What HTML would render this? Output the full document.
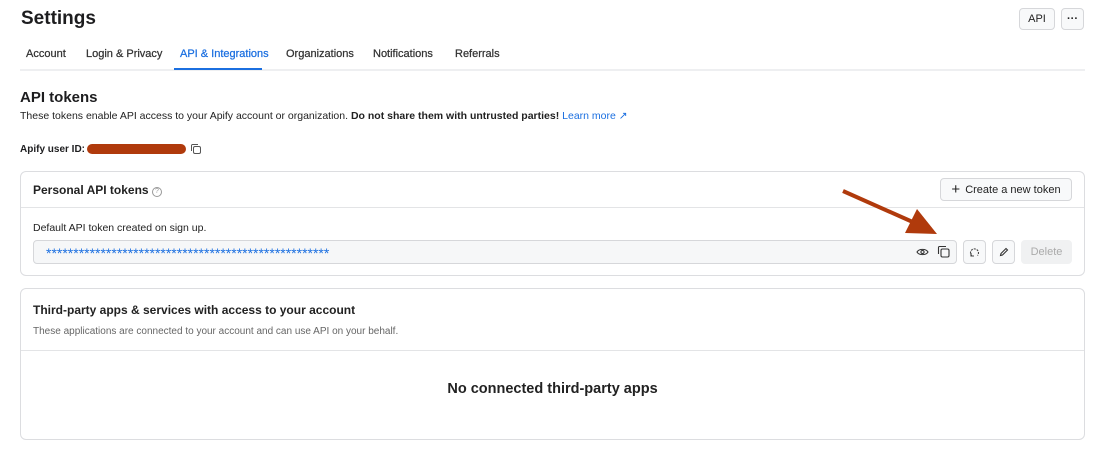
<!DOCTYPE html>
<html><head><style>
*{box-sizing:border-box;margin:0;padding:0}
body{width:1100px;height:457px;background:#fff;font-family:"Liberation Sans",Arial,sans-serif;color:#1d1d1f;position:relative;overflow:hidden}
.a{position:absolute}
.btn{position:absolute;border:1px solid #d6d7da;border-radius:4px;background:#f8f9fa;display:flex;align-items:center;justify-content:center;font-size:11px;color:#222}
.card{position:absolute;left:20px;width:1065px;border:1px solid #dcdde0;border-radius:6px}
.tab{position:absolute;top:48px;font-size:11px;color:#333;-webkit-text-stroke:0.25px #333}
</style></head><body>
<div class="a" style="left:21px;top:8px;font-size:19px;font-weight:bold">Settings</div>
<div class="btn" style="left:1019px;top:8px;width:36px;height:22px;font-size:11px">API</div>
<div class="btn" style="left:1061px;top:8px;width:23px;height:22px;font-weight:bold">···</div>
<div class="tab" style="left:26px">Account</div>
<div class="tab" style="left:86px">Login &amp; Privacy</div>
<div class="tab" style="left:180px;color:#1b6fe0;-webkit-text-stroke:0.25px #1b6fe0">API &amp; Integrations</div>
<div class="tab" style="left:286px">Organizations</div>
<div class="tab" style="left:373px">Notifications</div>
<div class="tab" style="left:455px">Referrals</div>
<div class="a" style="left:20px;top:69px;width:1065px;height:2px;background:#eeeff1"></div>
<div class="a" style="left:174px;top:68px;width:88px;height:2px;background:#1b6fe0"></div>
<div class="a" style="left:20px;top:89px;font-size:15px;font-weight:bold">API tokens</div>
<div class="a" style="left:20px;top:110px;font-size:10.5px;color:#222">These tokens enable API access to your Apify account or organization. <b>Do not share them with untrusted parties!</b> <span style="color:#1b6fe0">Learn more ↗</span></div>
<div class="a" style="left:20px;top:144px;font-size:10px;line-height:12px;font-weight:bold">Apify user ID:</div>
<div class="a" style="left:87px;top:144px;width:99px;height:10px;border-radius:5px;background:#b03a0c"></div>
<svg class="a" style="left:190px;top:143px" width="12" height="12" viewBox="0 0 12 12" fill="none" stroke="#555" stroke-width="1"><rect x="3.5" y="3.5" width="7" height="7" rx="1.5"/><path d="M1.5 8V2.5a1 1 0 0 1 1-1H8"/></svg>

<div class="card" style="top:171px;height:105px">
 <div class="a" style="left:12px;top:11px;font-size:12px;font-weight:bold;color:#222">Personal API tokens <span style="display:inline-block;width:10px;height:10px;border:1px solid #999;border-radius:50%;font-size:7px;color:#999;text-align:center;line-height:8px;vertical-align:1px;font-weight:normal">?</span></div>
 <div class="btn" style="left:919px;top:6px;width:132px;height:23px;font-size:11px"><span style="font-size:15px;margin-right:5px;font-weight:normal">+</span>Create a new token</div>
 <div class="a" style="left:0;top:35px;width:1063px;height:1px;background:#e3e4e6"></div>
 <div class="a" style="left:12px;top:50px;font-size:10.5px;color:#222">Default API token created on sign up.</div>
 <div class="a" style="left:12px;top:68px;width:924px;height:24px;border:1px solid #d6d7da;border-radius:4px;background:#f6f7f8"></div>
 <div class="a" style="left:25px;top:74px;font-size:14px;line-height:14px;color:#1b6fe0">****************************************************</div>
 <svg class="a" style="left:895px;top:75px" width="13" height="10" viewBox="0 0 13 10" fill="none" stroke="#333" stroke-width="1.1"><path d="M1 5C3 1.5 10 1.5 12 5C10 8.5 3 8.5 1 5Z"/><circle cx="6.5" cy="5" r="1.6"/></svg>
 <svg class="a" style="left:916px;top:73px" width="13" height="13" viewBox="0 0 13 13" fill="none" stroke="#333" stroke-width="1.1"><rect x="4" y="4" width="8" height="8" rx="1.5"/><path d="M1.5 9V2.5a1 1 0 0 1 1-1H9"/></svg>
 <div class="btn" style="left:942px;top:68px;width:23px;height:24px"><svg width="11" height="11" viewBox="0 0 11 11" fill="none" stroke="#444" stroke-width="1.1"><path d="M3 9A4 4 0 1 1 8.5 8.5" stroke-dasharray="2 1"/><path d="M2 6v3h3"/></svg></div>
 <div class="btn" style="left:971px;top:68px;width:23px;height:24px"><svg width="10" height="10" viewBox="0 0 10 10" fill="none" stroke="#333" stroke-width="1.1"><path d="M1.5 8.5l.5-2 5-5 1.5 1.5-5 5z"/></svg></div>
 <div class="btn" style="left:1000px;top:68px;width:51px;height:24px;background:#f0f1f2;border-color:#f0f1f2;color:#aaa">Delete</div>
</div>

<div class="card" style="top:288px;height:152px">
 <div class="a" style="left:12px;top:14px;font-size:12px;font-weight:bold;color:#222">Third-party apps &amp; services with access to your account</div>
 <div class="a" style="left:12px;top:37px;font-size:10px;color:#666">These applications are connected to your account and can use API on your behalf.</div>
 <div class="a" style="left:0;top:61px;width:1063px;height:1px;background:#e3e4e6"></div>
 <div class="a" style="left:0;top:92px;width:1063px;text-align:center;font-size:14.5px;font-weight:bold;color:#222">No connected third-party apps</div>
</div>

<svg class="a" style="left:0;top:0" width="1100" height="457"><line x1="843" y1="191" x2="915" y2="223" stroke="#b03a0c" stroke-width="4"/><polygon points="937,234 905,233 917,209" fill="#b03a0c"/></svg>
</body></html>
